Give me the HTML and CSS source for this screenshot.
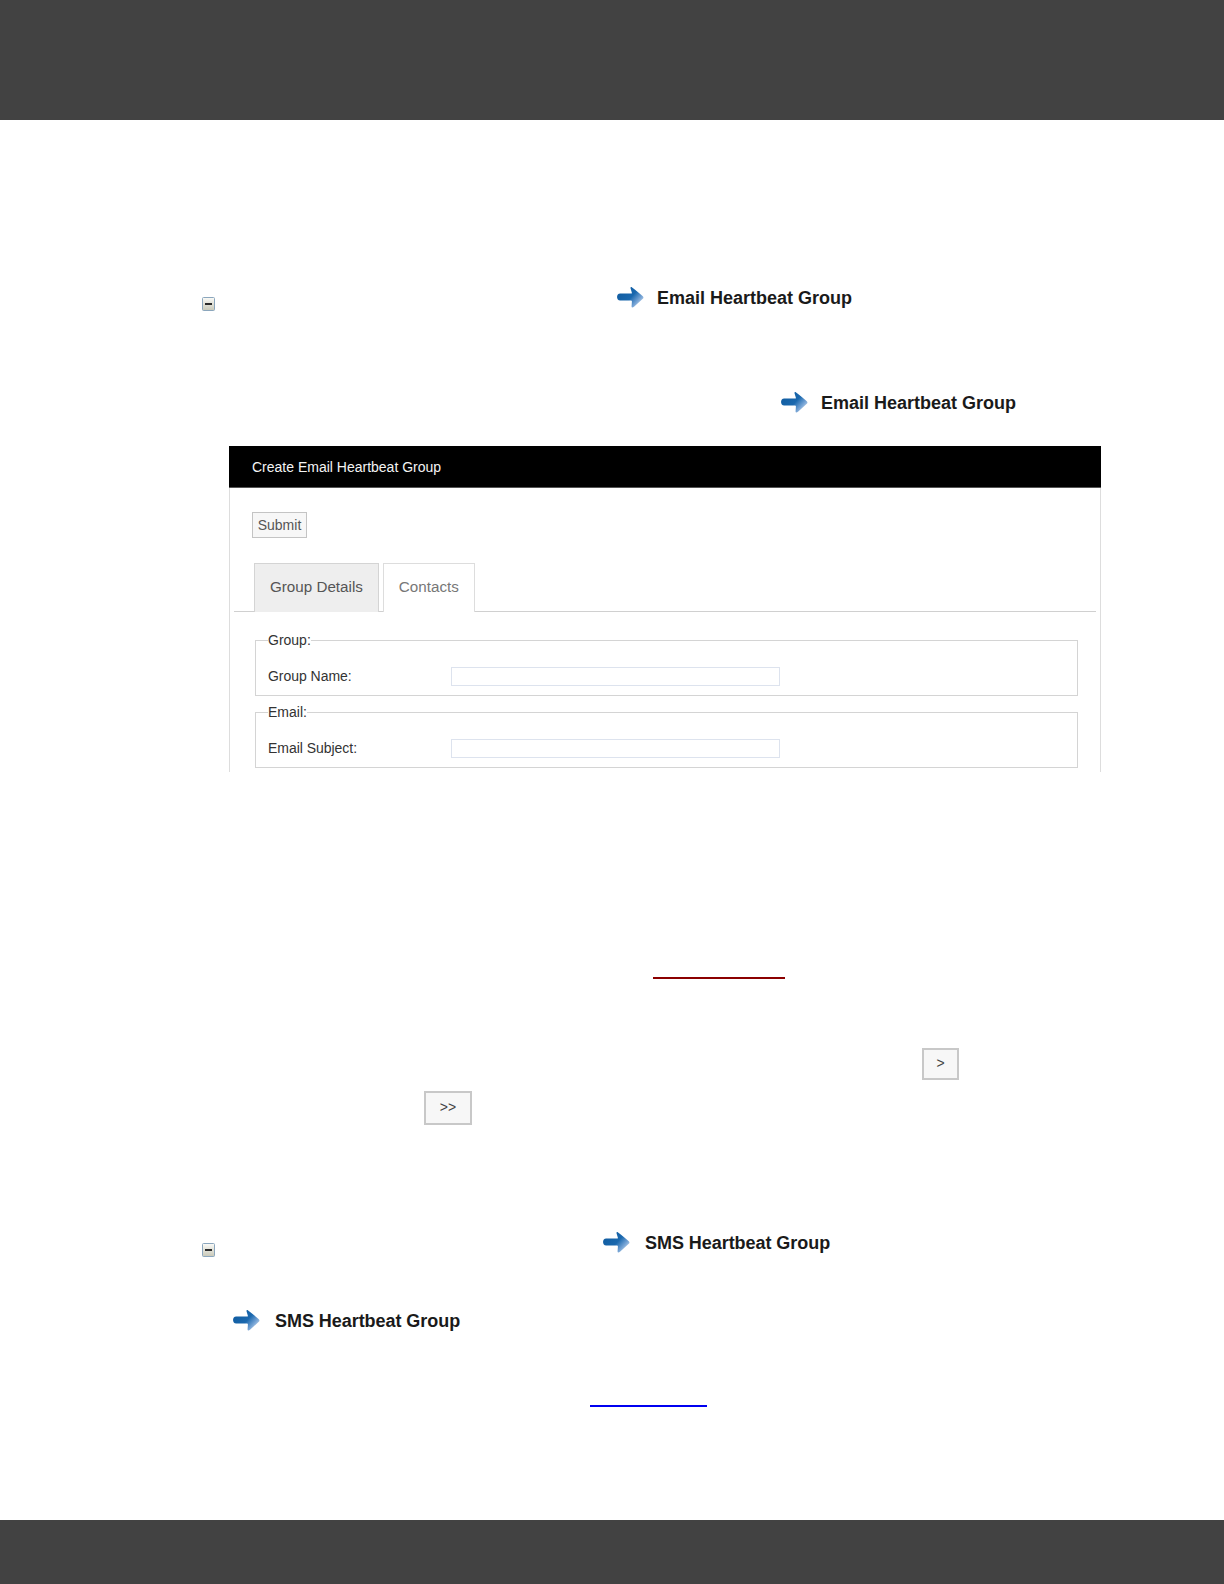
FILE: index.html
```html
<!DOCTYPE html>
<html lang="en">
<head>
<meta charset="utf-8">
<title>Heartbeat Groups</title>
<link rel="stylesheet" href="styles.css">
</head>
<body>
<svg class="defs" width="0" height="0" aria-hidden="true">
  <defs>
    <linearGradient id="arrowFill" x1="0" y1="0.15" x2="1" y2="0.85">
      <stop offset="0" stop-color="#0f5a9e"/>
      <stop offset="0.52" stop-color="#1a68ae"/>
      <stop offset="0.75" stop-color="#6f9fd2"/>
      <stop offset="1" stop-color="#d5e3f4"/>
    </linearGradient>
    <linearGradient id="minusFill" x1="0" y1="0" x2="0" y2="1">
      <stop offset="0" stop-color="#fbfbf8"/>
      <stop offset="1" stop-color="#c8c8b8"/>
    </linearGradient>
    <symbol id="arrow" viewBox="0 0 27 24">
      <path d="M3.2 7.6H14.2C14.8 7.6 15 7.2 14.8 6.6L13.6 2.4C13.2 1 14 .6 15.1 1.4C18.5 4 22.5 7.4 25.8 10.2C26.7 11 26.7 12 25.8 12.8L17 20.8C15.6 22 14.4 21.8 14.6 20.2L14.9 15.8C15 15 14.7 14.6 14 14.6H3.2C-1 14.6-1 7.6 3.2 7.6Z" fill="url(#arrowFill)"/>
    </symbol>
    <symbol id="minus" viewBox="0 0 13 14">
      <rect x=".5" y=".5" width="12" height="13" rx="1" fill="url(#minusFill)" stroke="#8ba6bd"/>
      <rect x="3" y="6" width="7" height="2" fill="#2a2a2a"/>
    </symbol>
  </defs>
</svg>

<header class="top-bar"></header>

<main class="content">
  <div class="step step-email">
    <svg class="minus-icon"><use href="#minus"/></svg>
    <span class="ref ref-email-1">
      <svg class="arrow-icon"><use href="#arrow"/></svg>
      <b class="ref-label">Email Heartbeat Group</b>
    </span>
  </div>

  <div class="ref-row ref-row-email">
    <span class="ref">
      <svg class="arrow-icon"><use href="#arrow"/></svg>
      <b class="ref-label">Email Heartbeat Group</b>
    </span>
  </div>

  <section class="panel">
    <h2 class="panel-title">Create Email Heartbeat Group</h2>
    <div class="panel-body">
      <button class="submit" type="button">Submit</button>
      <div class="tabs">
        <span class="tab tab-active">Group Details</span>
        <span class="tab">Contacts</span>
      </div>
      <fieldset class="group">
        <legend>Group:</legend>
        <label class="field"><span class="field-label">Group Name:</span><input class="field-input" type="text"></label>
      </fieldset>
      <fieldset class="group">
        <legend>Email:</legend>
        <label class="field"><span class="field-label">Email Subject:</span><input class="field-input" type="text"></label>
      </fieldset>
    </div>
  </section>

  <div class="link-row link-row-red"><a class="blank-link red"></a></div>

  <div class="button-row button-row-one"><span class="mini-btn mini-one">&gt;</span></div>
  <div class="button-row button-row-two"><span class="mini-btn mini-two">&gt;&gt;</span></div>

  <div class="step step-sms">
    <svg class="minus-icon"><use href="#minus"/></svg>
    <span class="ref ref-sms-1">
      <svg class="arrow-icon"><use href="#arrow"/></svg>
      <b class="ref-label">SMS Heartbeat Group</b>
    </span>
  </div>

  <div class="ref-row ref-row-sms">
    <span class="ref">
      <svg class="arrow-icon"><use href="#arrow"/></svg>
      <b class="ref-label">SMS Heartbeat Group</b>
    </span>
  </div>

  <div class="link-row link-row-blue"><a class="blank-link blue"></a></div>
</main>

<footer class="bottom-bar"></footer>
</body>
</html>
```

FILE: styles.css
```css
* { box-sizing: border-box; }

html, body { margin: 0; padding: 0; }

body {
  width: 1224px;
  height: 1584px;
  display: flex;
  flex-direction: column;
  background: #fff;
  font-family: "Liberation Sans", Arial, sans-serif;
  overflow: hidden;
}

.defs { position: absolute; }

.top-bar { height: 120px; background: #424242; flex: none; }
.bottom-bar { height: 64px; background: #424242; flex: none; }

.content { flex: 1; padding-left: 202px; }

.step { display: flex; align-items: flex-start; }
.step-email { margin-top: 166px; height: 32px; }
.step-sms { margin-top: 106px; height: 32px; }

.minus-icon { width: 13px; height: 14px; flex: none; margin-top: 11px; }
.step-sms .minus-icon { margin-top: 12px; }

.ref { display: inline-flex; align-items: center; height: 24px; }
.ref-email-1 { margin-left: 402px; }
.ref-sms-1 { margin-left: 388px; }

.arrow-icon { width: 27px; height: 24px; flex: none; }
.ref-label {
  margin-left: 13px;
  font-size: 18px;
  font-weight: bold;
  color: #1a1a1a;
  white-space: nowrap;
}
.ref-sms-1 .ref-label, .ref-row-sms .ref-label { margin-left: 15px; letter-spacing: -0.05px; }

.ref-row { display: flex; height: 24px; }
.ref-row-email { margin-top: 73px; padding-left: 579px; }
.ref-row-sms { margin-top: 46px; padding-left: 31px; }

.panel { margin: 31px 0 0 27px; width: 872px; }
.panel-title {
  margin: 0;
  height: 42px;
  padding-left: 23px;
  background: #000;
  border-bottom: 1px solid #555;
  color: #f4f4f4;
  font-size: 14px;
  font-weight: normal;
  line-height: 42px;
}
.panel-body {
  height: 284px;
  padding: 24px 4px 0;
  border-left: 1px solid #ddd;
  border-right: 1px solid #ddd;
}

.submit {
  display: block;
  width: 55px;
  height: 26px;
  margin-left: 18px;
  padding: 0;
  background: #f7f7f7;
  border: 1px solid #c4c4c4;
  color: #555;
  font: 14px "Liberation Sans", Arial, sans-serif;
}

.tabs {
  display: flex;
  gap: 4px;
  height: 49px;
  margin-top: 25px;
  padding-left: 20px;
  border-bottom: 1px solid #d0d0d0;
}
.tab {
  display: block;
  height: 49px;
  padding: 0 15px;
  background: #fff;
  border: 1px solid #ddd;
  border-bottom: 0;
  color: #777;
  font-size: 15.2px;
  line-height: 46px;
}
.tab-active { background: #eee; color: #555; border-color: #d4d4d4; }

.group {
  width: 823px;
  height: 64px;
  margin: 20px 0 0 21px;
  padding: 0 0 0 12px;
  border: 1px solid #d4d4d4;
  min-width: 0;
}
.group + .group { margin-top: 8px; }
.group legend {
  padding: 0;
  margin: 0;
  font-size: 14px;
  line-height: 16px;
  color: #333;
}

.field { display: flex; align-items: center; height: 19px; margin-top: 19px; }
.field-label { width: 183px; padding-bottom: 2px; font-size: 14px; letter-spacing: -0.03px; color: #333; flex: none; }
.field-input {
  width: 329px;
  height: 19px;
  padding: 0;
  background: #fff;
  border: 1px solid #dde3ee;
}

.link-row { height: 2px; }
.blank-link { display: block; height: 2px; }
.link-row-red { margin-top: 205px; padding-left: 451px; }
.link-row-blue { margin-top: 72px; padding-left: 388px; }
.red { width: 132px; background: #8b0000; }
.blue { width: 117px; background: #0000f0; }

.button-row { display: flex; }
.button-row-one { margin-top: 69px; padding-left: 720px; }
.button-row-two { margin-top: 11px; padding-left: 222px; }

.mini-btn {
  display: block;
  background: #f7f7f7;
  border: 2px solid #c8c8c8;
  color: #444;
  font-size: 14px;
  text-align: center;
}
.mini-one { width: 37px; height: 32px; line-height: 26px; }
.mini-two { width: 48px; height: 34px; line-height: 28px; }
```
